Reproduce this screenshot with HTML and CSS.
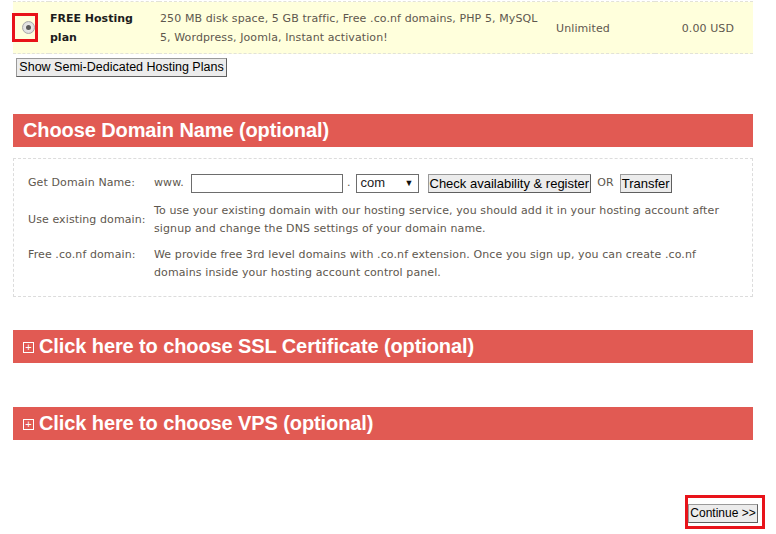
FILE: index.html
```html
<!DOCTYPE html>
<html lang="en">
<head>
  <meta charset="UTF-8" />
  <title>Order Hosting</title>
  <link rel="stylesheet" href="styles.css">
</head>
<body>
  <div class="page">
    <table class="plan-table">
      <tr class="plan-row">
        <td class="plan-pick">
          <span class="mark">
            <span class="radio"><span class="radio-dot"></span></span>
          </span>
        </td>
        <td class="plan-name">FREE Hosting plan</td>
        <td class="plan-desc">250 MB disk space, 5 GB traffic, Free .co.nf domains, PHP 5, MySQL 5, Wordpress, Joomla, Instant activation!</td>
        <td class="plan-period">Unlimited</td>
        <td class="plan-price">0.00 USD</td>
      </tr>
    </table>
    <button type="button" class="btn btn-show">Show Semi-Dedicated Hosting Plans</button>

    <h2 class="bar bar-domain">Choose Domain Name (optional)</h2>
    <div class="domain-box">
      <table class="domain-table">
        <tr class="row-get">
          <td class="label">Get Domain Name:</td>
          <td class="value">
            <div class="domain-line">
              <span>www.</span>
              <input type="text" class="domain-input" />
              <span class="dot">.</span>
              <span class="tld">com <span class="arrow">&#9660;</span></span>
              <button type="button" class="btn btn-check">Check availability &amp; register</button>
              <span class="or">OR</span>
              <button type="button" class="btn btn-transfer">Transfer</button>
            </div>
          </td>
        </tr>
        <tr class="row-existing">
          <td class="label">Use existing domain:</td>
          <td class="value">To use your existing domain with our hosting service, you should add it in your hosting account after signup and change the DNS settings of your domain name.</td>
        </tr>
        <tr class="row-free">
          <td class="label">Free .co.nf domain:</td>
          <td class="value">We provide free 3rd level domains with .co.nf extension. Once you sign up, you can create .co.nf domains inside your hosting account control panel.</td>
        </tr>
      </table>
    </div>

    <h2 class="bar bar-toggle"><span class="plus">+</span>Click here to choose SSL Certificate (optional)</h2>

    <h2 class="bar bar-toggle bar-vps"><span class="plus">+</span>Click here to choose VPS (optional)</h2>

    <div class="actions">
      <span class="mark mark-continue">
        <button type="button" class="btn btn-continue">Continue &gt;&gt;</button>
      </span>
    </div>
  </div>
</body>
</html>
```

FILE: styles.css
```css
* {
  box-sizing: border-box;
}

body {
  margin: 0;
  background: white;
  font-family: "DejaVu Sans", Verdana, sans-serif;
  font-size: 11px;
  letter-spacing: 0.1px;
  color: #5e574e;
}

.page {
  width: 740px;
  margin-left: 13px;
  padding-top: 1px;
}

/* plan row */
.plan-table {
  width: 100%;
  border-collapse: collapse;
}

.plan-row td {
  background: #ffffdc;
  border-top: 1px dashed #e2e2d8;
  border-bottom: 1px dashed #e2e2d8;
  height: 52px;
  line-height: 19px;
  vertical-align: middle;
}

.plan-pick {
  width: 36px;
  padding-left: 0;
}

.mark {
  display: inline-block;
  border: 3px solid #e8131a;
}

.plan-pick .mark {
  width: 26px;
  height: 29px;
  margin-left: -1px;
  display: flex;
  align-items: center;
  justify-content: flex-end;
}

.radio {
  width: 13px;
  height: 13px;
  border-radius: 50%;
  border: 1px solid #a9a9a9;
  background: radial-gradient(circle, #f2f2f2, #d6d6d6);
  display: flex;
  align-items: center;
  justify-content: center;
}

.radio-dot {
  width: 5px;
  height: 5px;
  border-radius: 50%;
  background: #5a5a5a;
}

.plan-name {
  width: 110px;
  color: #1d1d1d;
  font-weight: bold;
  letter-spacing: 0;
  padding-right: 10px;
  vertical-align: top;
}

.plan-desc {
  width: 396px;
  padding-right: 14px;
}

.plan-period {
  width: 100px;
  padding-top: 2px;
}

.plan-price {
  text-align: right;
  padding-right: 19px;
  padding-top: 2px;
}

/* buttons */
.btn {
  font-family: "Liberation Sans", Arial, sans-serif;
  font-size: 13px;
  letter-spacing: 0;
  white-space: nowrap;
  color: #000;
  background: #ececec;
  border: 1px solid #9a9a9a;
  border-right-color: #5f5f5f;
  border-bottom-color: #5f5f5f;
  padding: 0 2px;
  height: 19px;
  line-height: 17px;
  cursor: pointer;
}

.btn-show {
  display: block;
  margin: 4px 0 0 3px;
  width: 211px;
  padding: 0;
  font-size: 12.5px;
}

/* red headers */
.bar {
  margin: 37px 0 0;
  background: #e15a53;
  color: white;
  font-family: "Liberation Sans", Arial, sans-serif;
  font-size: 20px;
  font-weight: bold;
  letter-spacing: -0.1px;
  height: 33px;
  line-height: 33px;
  padding-left: 10px;
}

.bar-toggle {
  margin-top: 33px;
  display: flex;
  align-items: center;
}

.bar-vps {
  margin-top: 44px;
}

.plus {
  width: 11px;
  height: 11px;
  border: 1px solid white;
  font-size: 11px;
  line-height: 8px;
  text-align: center;
  font-weight: normal;
  margin-right: 5px;
  margin-top: 1px;
}

/* domain box */
.domain-box {
  margin-top: 11px;
  border: 1px dashed #dcdcdc;
  padding: 12px 14px 14px;
}

.domain-table {
  border-collapse: collapse;
}

.domain-table td {
  line-height: 18px;
  padding: 0;
  vertical-align: middle;
}

.row-get td {
  padding-bottom: 7px;
}

.row-existing td {
  padding-bottom: 8px;
}

.row-free td {
  vertical-align: top;
}

.domain-table .label {
  width: 126px;
  white-space: nowrap;
}

.domain-table .value {
  width: 568px;
}

.domain-line {
  display: flex;
  align-items: center;
  height: 24px;
}

.domain-input {
  width: 152px;
  height: 19px;
  margin-left: 7px;
  border: 1px solid #6d6d6d;
  padding: 0 3px;
}

.dot {
  margin: 0 5px 0 4px;
}

.tld {
  display: flex;
  justify-content: space-between;
  align-items: center;
  width: 63px;
  height: 19px;
  border: 1px solid #6d6d6d;
  padding: 0 4px;
  font-family: "Liberation Sans", Arial, sans-serif;
  font-size: 13px;
  letter-spacing: 0;
  color: #222;
}

.arrow {
  font-size: 9px;
  color: #111;
}

.btn-check {
  margin-left: 9px;
  padding: 0 1px;
}

.or {
  margin: 0 6px 0 6px;
}

.btn-transfer {
  padding: 0 1px;
}

/* continue */
.actions {
  display: flex;
  justify-content: flex-end;
  margin-top: 55px;
  margin-right: -12px;
}

.mark-continue {
  padding: 6px 4px 3px 0;
}

.btn-continue {
  display: block;
  width: 70px;
  padding: 0;
  font-size: 12px;
}
```
